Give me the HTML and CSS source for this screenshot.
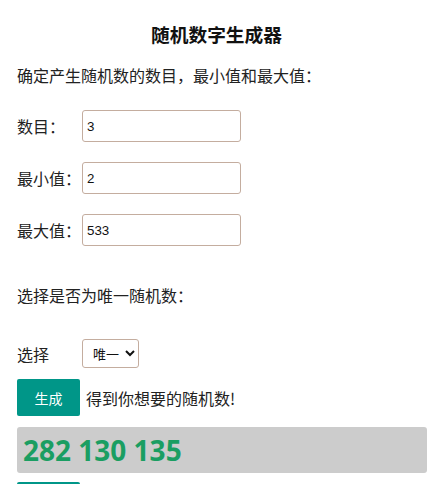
FILE: index.html
```html
<!DOCTYPE html>
<html lang="zh-CN">
<head>
  <meta charset="UTF-8" />
  <meta name="viewport" content="width=device-width, initial-scale=1.0"/>
  <title>随机数字生成器</title>
  <link rel="stylesheet" href="styles.css">
</head>
<body>
  <div class="page">
    <h3 class="title">随机数字生成器</h3>

    <p class="hint">确定产生随机数的数目，最小值和最大值：</p>

    <div class="field">
      <label for="count">数目：</label>
      <input type="text" id="count" value="3">
    </div>
    <div class="field">
      <label for="min">最小值：</label>
      <input type="text" id="min" value="2">
    </div>
    <div class="field">
      <label for="max">最大值：</label>
      <input type="text" id="max" value="533">
    </div>

    <p class="hint hint-unique">选择是否为唯一随机数：</p>

    <div class="field field-select">
      <label for="unique">选择</label>
      <select id="unique">
        <option value="1">唯一</option>
        <option value="0">可重复</option>
      </select>
    </div>

    <div class="action">
      <button class="btn" onclick="generate()">生成</button>
      <span>得到你想要的随机数!</span>
    </div>

    <div class="result" id="result">282 130 135</div>

    <button class="btn btn-more">清空</button>
  </div>

  <script>
    function generate() {
      const n = parseInt(document.getElementById("count").value);
      const min = parseInt(document.getElementById("min").value);
      const max = parseInt(document.getElementById("max").value);
      const unique = document.getElementById("unique").value === "1";
      if (!n || isNaN(min) || isNaN(max) || max < min) return;
      if (unique && n > max - min + 1) return;

      const list = [];
      while (list.length < n) {
        const r = Math.floor(Math.random() * (max - min + 1)) + min;
        if (unique && list.includes(r)) continue;
        list.push(r);
      }
      document.getElementById("result").innerText = list.join(" ");
    }
  </script>
</body>
</html>
```

FILE: styles.css
```css
* {
  box-sizing: border-box;
  margin: 0;
  padding: 0;
}

body {
  font-family: "Noto Sans CJK SC", "Noto Sans", sans-serif;
  font-size: 16px;
  color: #222;
  background: #fff;
}

.page {
  padding: 0 17px;
}

.title {
  font-size: 18.72px;
  font-weight: bold;
  text-align: center;
  line-height: 24px;
  margin-top: 22px;
  color: #111;
}

.hint {
  line-height: 24px;
  margin-top: 17px;
}

.field {
  display: flex;
  align-items: center;
  margin-top: 23px;
}

.field + .field {
  margin-top: 20px;
}

.field label {
  width: 65px;
  line-height: 24px;
}

.field input {
  width: 159px;
  height: 32px;
  padding: 0 4px;
  border: 1px solid #c4ad9f;
  border-radius: 3px;
  font-family: "Liberation Sans", Arial, sans-serif;
  font-size: 13.33px;
  color: #111;
}

.hint-unique {
  margin-top: 37px;
}

.field-select {
  margin-top: 32px;
}

.field select {
  width: 57px;
  height: 29px;
  padding: 0 0 0 6px;
  border: 1px solid #c4ad9f;
  border-radius: 3px;
  background: #fff;
  font-family: "Noto Sans CJK SC", sans-serif;
  font-size: 13px;
  color: #111;
}

.action {
  display: flex;
  align-items: center;
  gap: 6px;
  margin-top: 11px;
}

.btn {
  width: 63px;
  height: 37px;
  border: none;
  border-radius: 2px;
  background-color: #009688;
  color: #fff;
  font-family: "Noto Sans CJK SC", sans-serif;
  font-size: 14px;
  cursor: pointer;
}

.result {
  width: 410px;
  height: 46px;
  margin-top: 11px;
  padding: 0 6px;
  background: #ccc;
  border-radius: 3px;
  font-family: "Open Sans", "Noto Sans", sans-serif;
  font-size: 28px;
  font-weight: bold;
  line-height: 46px;
  color: #1a9e62;
}

.btn-more {
  display: block;
  margin-top: 9px;
}
```
